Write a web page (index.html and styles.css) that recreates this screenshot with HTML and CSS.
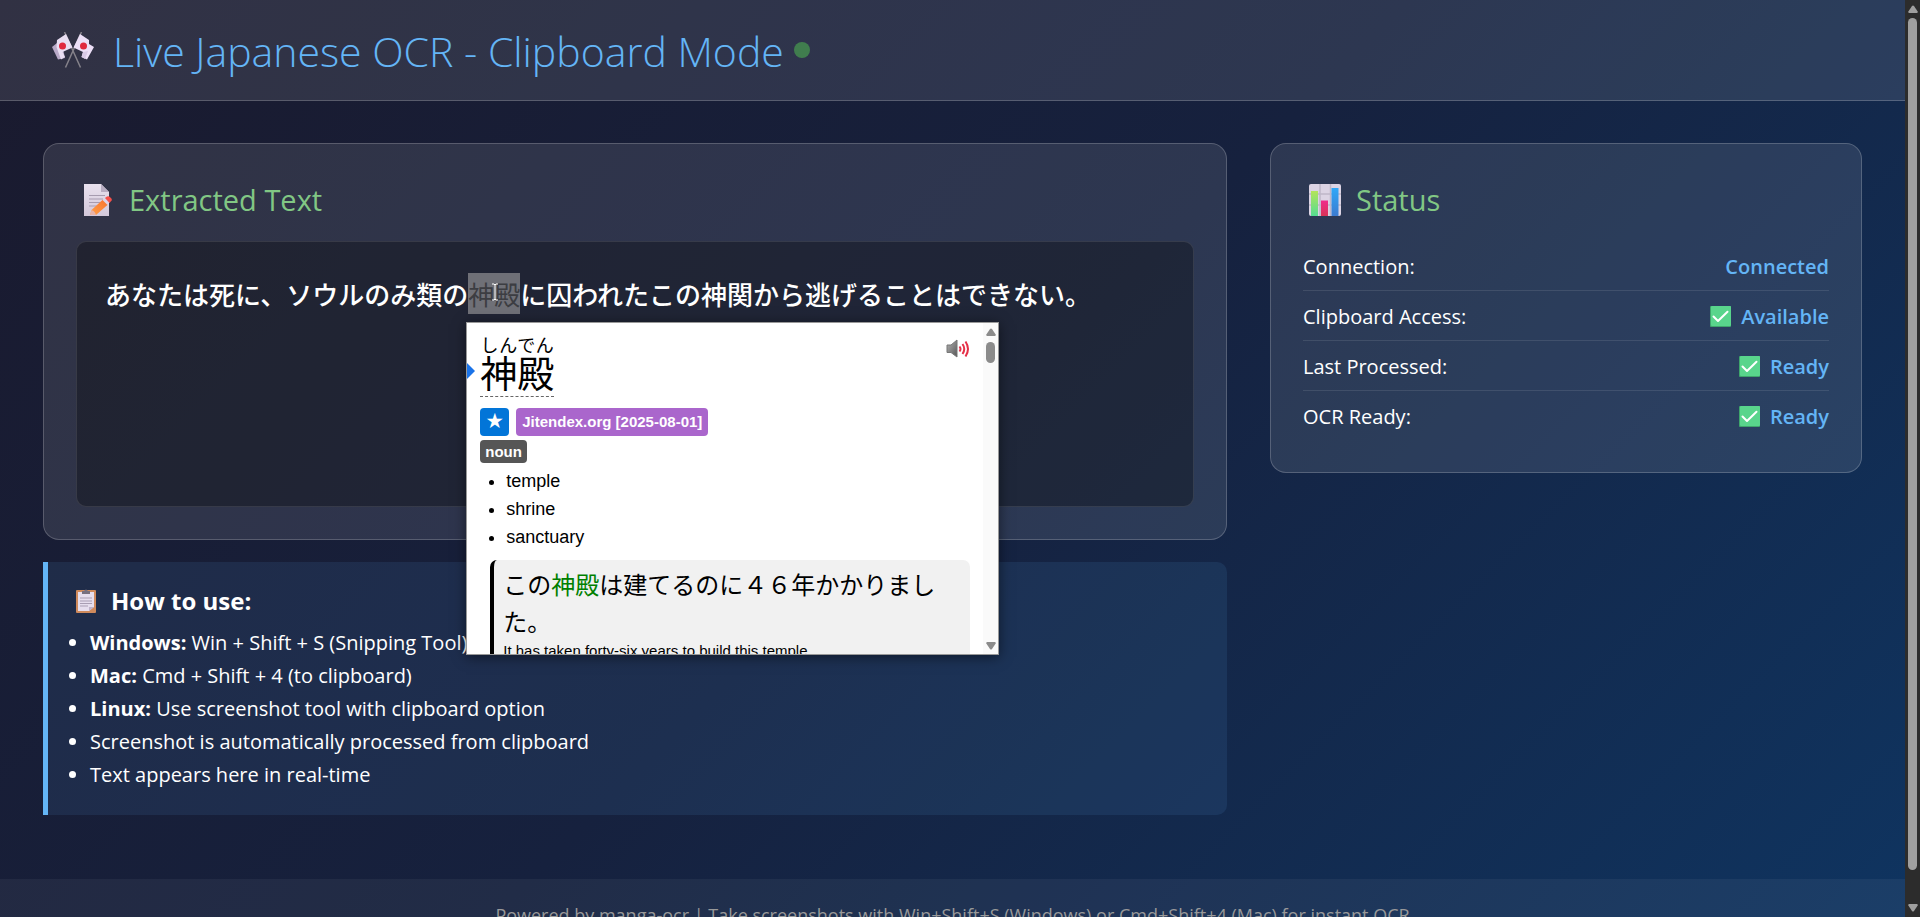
FILE: index.html
```html
<!DOCTYPE html>
<html lang="en">
<head>
<meta charset="utf-8">
<title>Live Japanese OCR - Clipboard Mode</title>
<link rel="stylesheet" href="styles.css">
</head>
<body>
<svg class="defs" width="0" height="0" aria-hidden="true">
  <defs>
    <linearGradient id="paper" x1="0" y1="0" x2="0" y2="1"><stop offset="0" stop-color="#e9e1ee"/><stop offset="1" stop-color="#d3c8da"/></linearGradient>
    <linearGradient id="pencil" x1="0" y1="1" x2="1" y2="0"><stop offset="0" stop-color="#ffa047"/><stop offset="1" stop-color="#f8722f"/></linearGradient>
    <linearGradient id="barGreen" x1="0" y1="0" x2="0" y2="1"><stop offset="0" stop-color="#b4e45a"/><stop offset="1" stop-color="#55dc92"/></linearGradient>
    <linearGradient id="barPink" x1="0" y1="0" x2="0" y2="1"><stop offset="0" stop-color="#f02c8c"/><stop offset="1" stop-color="#d93457"/></linearGradient>
    <linearGradient id="barBlue" x1="0" y1="0" x2="0" y2="1"><stop offset="0" stop-color="#2fa8f8"/><stop offset="1" stop-color="#3c7bd0"/></linearGradient>
    <linearGradient id="horn" x1="0" y1="0" x2="1" y2="1"><stop offset="0" stop-color="#b5b5b5"/><stop offset="1" stop-color="#555"/></linearGradient>
    <symbol id="check" viewBox="0 0 21 21">
      <rect width="21" height="21" rx="1" fill="#3fa56c"/>
      <rect x="1" width="20" height="20" rx="1" fill="#59d58c"/>
      <path d="M3.5 10.5 8 15 17.5 5.800" fill="none" stroke="#fff" stroke-width="2" stroke-linecap="round" stroke-linejoin="round"/>
    </symbol>
  </defs>
</svg>
<div class="page">
  <header class="header">
    <svg class="flags" viewBox="0 0 42 36" aria-hidden="true">
      <path d="M12.500 0 28.500 35.500M29.500 0 13.500 35.500" stroke="#85828a" stroke-width="1.500"/>
      <path d="M5 11 0 15 6 27.500 13 26 11 17z" fill="#b9aac8"/>
      <path d="M5 8 14 2 20.500 15.500 10.500 20 13 25 9 27.500 4.500 15z" fill="#e9def2"/>
      <path d="M37 8 28 2 21.500 15.500 31 20 29.500 25 35 27.500 42 15 37 12z" fill="#ecdff7"/>
      <path d="M31 20 36 19 33 27 29.500 25z" fill="#d8c9e6"/>
      <circle cx="10.500" cy="14" r="3.500" fill="#e0283e"/><circle cx="31.500" cy="14" r="3.500" fill="#e0283e"/>
    </svg>
    <h1 class="title">Live Japanese OCR - Clipboard Mode</h1>
    <span class="live-dot"></span>
  </header>

  <main class="main">
    <div class="primary">
      <section class="card">
        <h2 class="card-title">
          <svg class="title-icon" viewBox="0 0 32 32" aria-hidden="true">
            <path d="M2 0h17l8 8v24H2z" fill="url(#paper)"/>
            <path d="M19 0v8h8z" fill="#b8adc2"/>
            <path d="M7 11.500h16M7 15h14M7 18.500h11M7 22h9" stroke="#a79cb0" stroke-width="1"/>
            <path d="M8 31 9.500 26 21 15.500 26 20.500 14 31z" fill="url(#pencil)"/>
            <path d="M20.500 16 23 14 27.500 18.500 25.500 21z" fill="#ddd3e6"/>
            <path d="M23 14 25 12.500Q28 11.500 30 16L27.500 19z" fill="#f7504a"/>
            <path d="M8 31 9.500 26Q13 27 14 31z" fill="#e8b3a8"/>
          </svg>
          Extracted Text
        </h2>
        <div class="text-box">
          <p class="ocr-text" lang="ja">あなたは死に、ソウルのみ類の<span class="word"><mark class="selection">神殿</mark>
            <svg class="caret" viewBox="0 0 8 18" aria-hidden="true"><path d="M1 1h2l1 1 1-1h2M4 2v14M1 17h2l1-1 1 1h2" fill="none" stroke="#fff"/></svg>
            <span class="popup" role="dialog" aria-label="神殿">
              <span class="popup-body">
                <span class="entry-head">
                  <ruby class="headword">神殿<rt>しんでん</rt></ruby>
                  <button class="audio" type="button" aria-label="Play audio">
                    <svg class="audio-icon" viewBox="0 0 24 20" aria-hidden="true">
                      <path d="M1 6h4l6-5v17l-6-4.500H1z" fill="url(#horn)" stroke="#777"/>
                      <path d="M13.500 7.500q2 2.500 0 5M16.500 5q3.500 5 0 10M19.500 2.500q5 7.500 0 15" fill="none" stroke="#e53048" stroke-width="2"/>
                    </svg>
                  </button>
                </span>
                <span class="tags">
                  <span class="tag tag-star">★</span>
                  <span class="tag tag-dict">Jitendex.org [2025-08-01]</span>
                </span>
                <span class="tags"><span class="tag tag-pos">noun</span></span>
                <span class="glossary" role="list">
                  <span class="gloss" role="listitem">temple</span>
                  <span class="gloss" role="listitem">shrine</span>
                  <span class="gloss" role="listitem">sanctuary</span>
                </span>
                <span class="example">
                  <span class="example-ja">この<span class="hit">神殿</span>は建てるのに４６年かかりました。</span>
                  <span class="example-en" lang="en">It has taken forty-six years to build this temple.</span>
                </span>
              </span>
              <span class="scroll scroll-popup">
                <svg class="arrow" viewBox="0 0 10 8" aria-hidden="true"><path d="M4 1Q5 0 6 1L10 7 9 8H1L0 7z"/></svg>
                <span class="thumb"></span>
                <svg class="arrow arrow-end" viewBox="0 0 10 8" aria-hidden="true"><path d="M4 7Q5 8 6 7L10 1 9 0H1L0 1z"/></svg>
              </span>
              <svg class="current" viewBox="0 0 8 16" aria-hidden="true"><path d="M0 0 8 8 0 16z" fill="#1a73e8"/></svg>
            </span></span>に囚われたこの神関から逃げることはできない。</p>
        </div>
      </section>

      <section class="help">
        <h3 class="help-title">
          <svg class="help-icon" viewBox="0 0 20 24" aria-hidden="true">
            <rect y="1" width="20" height="23" rx="1" fill="#cf8a5c"/>
            <path d="M2 3h16v15l-5 4H2z" fill="#e6deee"/><path d="M13 22v-4h5z" fill="#bfb3ca"/>
            <path d="M6 5V2h2q2-3 4 0h2v3z" fill="#77707f"/>
            <path d="M4 9h12M4 12h12M4 14.500h12M4 17h8" stroke="#a99eb3"/>
          </svg>
          How to use:
        </h3>
        <ul class="steps">
          <li><strong>Windows:</strong> Win + Shift + S (Snipping Tool)</li>
          <li><strong>Mac:</strong> Cmd + Shift + 4 (to clipboard)</li>
          <li><strong>Linux:</strong> Use screenshot tool with clipboard option</li>
          <li>Screenshot is automatically processed from clipboard</li>
          <li>Text appears here in real-time</li>
        </ul>
      </section>
    </div>

    <aside class="card">
      <h2 class="card-title">
        <svg class="title-icon" viewBox="0 0 32 32" aria-hidden="true">
          <rect width="32" height="32" rx="2" fill="#dcd4e4"/>
          <path d="M0 10h32M0 21h32M11 0v32M21.500 0v32" stroke="#bfb7c8" stroke-width="1.500"/>
          <path d="M2 7h7v25H2z" fill="url(#barGreen)"/><path d="M12 16.500h7V32h-7z" fill="url(#barPink)"/><path d="M22.500 4h7v28h-7z" fill="url(#barBlue)"/>
        </svg>
        Status
      </h2>
      <dl class="status">
        <div class="status-row"><dt>Connection:</dt><dd>Connected</dd></div>
        <div class="status-row"><dt>Clipboard Access:</dt><dd><svg class="check" aria-hidden="true"><use href="#check"/></svg>Available</dd></div>
        <div class="status-row"><dt>Last Processed:</dt><dd><svg class="check" aria-hidden="true"><use href="#check"/></svg>Ready</dd></div>
        <div class="status-row"><dt>OCR Ready:</dt><dd><svg class="check" aria-hidden="true"><use href="#check"/></svg>Ready</dd></div>
      </dl>
    </aside>
  </main>

  <footer class="footer">Powered by manga-ocr | Take screenshots with Win+Shift+S (Windows) or Cmd+Shift+4 (Mac) for instant OCR</footer>
</div>
<div class="scroll scroll-page">
  <svg class="arrow" viewBox="0 0 10 8" aria-hidden="true"><path d="M4 1Q5 0 6 1L10 7 9 8H1L0 7z"/></svg>
  <span class="thumb"></span>
  <svg class="arrow arrow-end" viewBox="0 0 10 8" aria-hidden="true"><path d="M4 7Q5 8 6 7L10 1 9 0H1L0 1z"/></svg>
</div>
</body>
</html>
```
FILE: styles.css
```css
* { box-sizing: border-box; }

body {
  margin: 0;
  height: 100vh;
  overflow: hidden;
  display: grid;
  grid-template-columns: 1fr 15px;
  font: 20px/33px "Open Sans", "Noto Sans", "Noto Sans CJK JP", sans-serif;
  color: #fff;
}
h1, h2, h3, p, ul, dl, dd { margin: 0; }
.defs { position: absolute; }

.page {
  min-width: 0;
  height: 100vh;
  overflow: hidden;
  background: linear-gradient(135deg, #1a1a2e 0%, #16213e 50%, #0f3460 100%);
}

.header {
  display: flex;
  align-items: center;
  padding: 20px 52px;
  background: rgba(255, 255, 255, 0.1);
  border-bottom: 1px solid rgba(255, 255, 255, 0.2);
}
.flags { width: 42px; height: 36px; flex: none; }
.title {
  margin-left: 19px;
  padding-top: 2px;
  font-size: 41px;
  line-height: 58px;
  font-weight: 300;
  color: #64b5f6;
}
.live-dot {
  width: 16px;
  height: 16px;
  margin-left: 10px;
  border-radius: 50%;
  background: #4caf50;
  opacity: 0.6;
}

.main {
  display: grid;
  grid-template-columns: 2fr 1fr;
  gap: 43px;
  align-items: start;
  padding: 42px 43px 64px;
}
.primary { display: grid; gap: 22px; min-width: 0; }

.card {
  padding: 32px;
  background: rgba(255, 255, 255, 0.1);
  border: 1px solid rgba(255, 255, 255, 0.2);
  border-radius: 16px;
}
.card-title {
  display: flex;
  align-items: center;
  gap: 15px;
  padding-left: 6px;
  margin-bottom: 17px;
  font-size: 29px;
  line-height: 48px;
  font-weight: 400;
  color: #81c784;
}
.title-icon { width: 32px; height: 32px; flex: none; }

.text-box {
  min-height: 266px;
  padding: 31px 28px;
  background: rgba(0, 0, 0, 0.3);
  border: 1px solid rgba(255, 255, 255, 0.1);
  border-radius: 10px;
}
.ocr-text {
  font-family: "Noto Sans CJK JP", sans-serif;
  font-size: 26px;
  font-weight: 500;
  line-height: 41px;
}
.word { position: relative; display: inline-block; }
.selection {
  display: inline-block;
  background: #6f7077;
  color: #3c3d42;
  font-weight: 400;
}
.caret { position: absolute; left: 23px; top: 10px; width: 8px; height: 18px; }

.popup {
  position: absolute;
  z-index: 2;
  left: -2px;
  top: 49px;
  width: 533px;
  height: 333px;
  overflow: hidden;
  display: flex;
  background: #fff;
  color: #000;
  border: 1px solid #999;
  box-shadow: 0 2px 12px rgba(0, 0, 0, 0.5);
  font-family: "Liberation Sans", "Noto Sans CJK JP", sans-serif;
  font-size: 19px;
  font-weight: 400;
  line-height: 28px;
  white-space: normal;
}
.popup-body { flex: 1; min-width: 0; padding: 13px 13px 0; }
.entry-head { display: flex; justify-content: space-between; align-items: flex-start; margin-bottom: 11px; }
.headword {
  font-size: 37px;
  line-height: 40px;
  border-bottom: 1px dashed #666;
}
.headword rt { font-size: 18px; line-height: 20px; }
.audio { margin: 3px 0 0; padding: 0; border: 0; background: none; line-height: 0; }
.audio-icon { width: 24px; height: 20px; }
.tags { display: flex; gap: 7px; margin-bottom: 4px; }
.tag {
  padding: 0 6px;
  border-radius: 4px;
  color: #fff;
  font-size: 15px;
  font-weight: 700;
  line-height: 28px;
}
.tag-star { background: #0275d8; font-size: 17px; }
.tag-dict { background: #aa66cc; }
.tag-pos { padding: 0 5px; background: #565656; line-height: 23px; }
.glossary { display: block; padding: 0 0 9px 26px; font-size: 18px; }
.gloss { display: list-item; list-style: disc; }
.example {
  display: block;
  margin-left: 10px;
  padding: 7px 9px;
  background: #f1f1f1;
  border-left: 4px solid #000;
  border-radius: 7px;
}
.example-ja { display: block; font-size: 24px; line-height: 37px; }
.example-en { display: block; font-size: 15px; line-height: 20px; }
.hit { color: #008000; }
.current { position: absolute; left: 0; top: 40px; width: 8px; height: 16px; }

.scroll { display: flex; flex-direction: column; align-items: center; }
.arrow { width: 10px; height: 8px; flex: none; }
.arrow-end { margin-top: auto; }
.thumb { border-radius: 5px; }
.scroll-popup { width: 15px; padding: 5px 0 4px; background: #fafafa; fill: #8b8b8b; }
.scroll-popup .thumb { width: 9px; height: 21px; margin-top: 6px; background: #8b8b8b; }
.scroll-page { padding: 5px 0; background: #2c2c2c; fill: #9f9f9f; }
.scroll-page .thumb { width: 9px; flex: 1; margin: 5px 0 34px; background: #9f9f9f; }

.help {
  padding: 21px 27px 24px 28px;
  background: rgba(100, 181, 246, 0.1);
  border-left: 5px solid #64b5f6;
  border-radius: 0 10px 10px 0;
}
.help-title {
  display: flex;
  align-items: center;
  gap: 15px;
  font-size: 24px;
  line-height: 36px;
}
.help-icon { width: 20px; height: 24px; }
.steps { padding: 7px 0 0 14px; }

.status-row {
  display: flex;
  justify-content: space-between;
  padding: 12px 0 10px;
  line-height: 27px;
  border-bottom: 1px solid rgba(255, 255, 255, 0.1);
}
.status-row:last-child { border-bottom: 0; }
.status-row dd { display: flex; align-items: center; gap: 10px; color: #64b5f6; font-weight: 600; }
.check { width: 21px; height: 21px; }

.footer {
  padding: 21px 43px;
  background: rgba(255, 255, 255, 0.05);
  color: #999;
  font-size: 18px;
  line-height: 30px;
  text-align: center;
}
```
